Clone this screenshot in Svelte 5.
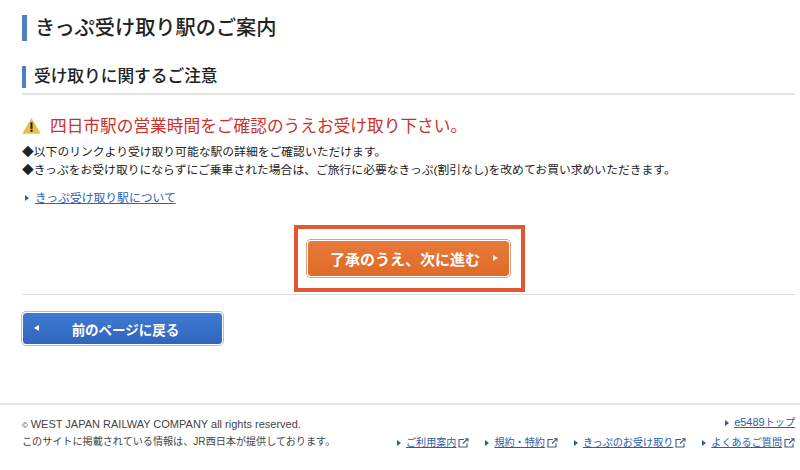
<script>
  const footerLinks = ['ご利用案内', '規約・特約', 'きっぷのお受け取り', 'よくあるご質問']
</script>

<main>
  <div class="content">
    <h1 class="title">きっぷ受け取り駅のご案内</h1>

    <h2 class="subtitle"><span>受け取りに関するご注意</span></h2>

    <p class="warning">
      <svg class="warnIcon" viewBox="0 0 18 16" width="19" height="17">
        <path d="M9 0.8 L17.4 15 Q17.6 15.8 16.8 15.8 L1.2 15.8 Q0.4 15.8 0.6 15 Z" fill="#eebb4d" />
        <rect x="8" y="5" width="2" height="6.2" fill="#222" />
        <rect x="8" y="12" width="2" height="2" fill="#222" />
      </svg>
      <span>四日市駅の営業時間をご確認のうえお受け取り下さい。</span>
    </p>
    <p class="note">◆以下のリンクより受け取り可能な駅の詳細をご確認いただけます。</p>
    <p class="note">◆きっぷをお受け取りにならずにご乗車された場合は、ご旅行に必要なきっぷ(割引なし)を改めてお買い求めいただきます。</p>

    <p class="infoLink"><span class="arrow"></span><a href="#top">きっぷ受け取り駅について</a></p>

    <div class="nextWrap">
      <div class="highlight">
        <button class="btn next">
          <span>了承のうえ、次に進む</span>
          <i class="tri right"></i>
        </button>
      </div>
    </div>

    <div class="backWrap">
      <button class="btn back">
        <i class="tri left"></i>
        <span>前のページに戻る</span>
      </button>
    </div>
  </div>

  <footer>
    <div class="copy">
      <p><span class="c">©</span> <span class="latin">WEST JAPAN RAILWAY COMPANY all rights reserved.</span></p>
      <p>このサイトに掲載されている情報は、JR西日本が提供しております。</p>
    </div>
    <div class="footLinks">
      <div class="topLink"><span class="arrow"></span><a href="#top"><span class="latin">e5489</span>トップ</a></div>
      <div class="linkRow">
        {#each footerLinks as label}
          <div class="footLink">
            <span class="arrow"></span><a href="#top">{label}</a>
            <svg class="ext" viewBox="0 0 11 10" width="11" height="10">
              <path d="M6 1.5 H1 V9 H9 V5.5" fill="none" stroke="#44587f" stroke-width="1.1" />
              <path d="M5 5.5 L9.5 1.2 M7 0.8 H10 V3.8" fill="none" stroke="#44587f" stroke-width="1.1" />
            </svg>
          </div>
        {/each}
      </div>
    </div>
  </footer>
</main>

<style>
  :global(body) {
    margin: 0;
    background: #fff;
  }
  main {
    width: 800px;
    height: 470px;
    overflow: hidden;
    font-family: "Liberation Sans", "Noto Sans CJK JP", sans-serif;
    color: #222;
  }
  p {
    margin: 0;
  }
  .content {
    padding: 15px 5px 0 22px;
    height: 389px;
    box-sizing: border-box;
  }
  .title {
    margin: 0;
    height: 26px;
    line-height: 26px;
    border-left: 5px solid #4d81c0;
    padding-left: 8px;
    font-size: 20.2px;
    font-weight: 500;
    color: #222;
  }
  .subtitle {
    margin: 25px 0 0;
    padding-bottom: 5px;
    border-bottom: 2px solid #e3e3e3;
    font-size: 16.7px;
    font-weight: 500;
    color: #222;
  }
  .subtitle span {
    display: block;
    height: 22px;
    line-height: 22px;
    border-left: 4px solid #4d81c0;
    padding-left: 8px;
  }
  .warning {
    margin-top: 18px;
    display: flex;
    align-items: center;
    gap: 9px;
    height: 24px;
    font-size: 16.7px;
    color: #c8322b;
  }
  .warnIcon {
    flex: none;
  }
  .note {
    font-size: 11.8px;
    line-height: 18px;
    color: #222;
  }
  .warning + .note {
    margin-top: 6px;
  }
  .infoLink {
    margin-top: 10px;
    font-size: 11.8px;
    line-height: 18px;
    display: flex;
    align-items: center;
  }
  .infoLink .arrow {
    margin: 0 6px 0 3px;
  }
  a {
    color: #2a63b8;
    text-decoration: underline;
  }
  .arrow {
    display: inline-block;
    width: 0;
    height: 0;
    border-left: 4px solid #2d62ad;
    border-top: 3px solid transparent;
    border-bottom: 3px solid transparent;
  }
  .nextWrap {
    margin-top: 18px;
    display: flex;
    justify-content: center;
    padding-bottom: 1px;
    border-bottom: 1px solid #ddd;
  }
  .highlight {
    border: 4px solid #e4572e;
    padding: 11px 11px 11px 9px;
    margin-bottom: 1px;
    margin-left: 2px;
  }
  .btn {
    display: flex;
    align-items: center;
    box-sizing: border-box;
    border-radius: 4px;
    font-family: inherit;
    font-weight: 700;
    color: #fff;
    padding: 0;
    position: relative;
  }
  .next {
    width: 203px;
    height: 37px;
    font-size: 15px;
    background: linear-gradient(#e8793a, #df6b27);
    border: 1px solid #fff;
    box-shadow: 0 0 0 1px #d9a07f;
    justify-content: flex-start;
    padding-left: 22px;
  }
  .tri {
    position: absolute;
    width: 0;
    height: 0;
    border-top: 3.5px solid transparent;
    border-bottom: 3.5px solid transparent;
  }
  .tri.right {
    right: 11px;
    top: 14px;
    border-left: 5px solid #fbeee6;
  }
  .tri.left {
    left: 11px;
    top: 12px;
    border-right: 5px solid #fff;
  }
  .backWrap {
    margin-top: 17px;
  }
  .back {
    width: 201px;
    height: 33px;
    font-size: 13.5px;
    background: linear-gradient(#3f7ad0, #2f66bd);
    border: 1px solid #fff;
    box-shadow: 0 0 0 1px #a9bfe0;
    justify-content: center;
    padding-left: 6px;
  }
  footer {
    border-top: 2px solid #e5e5e5;
    margin-top: 14px;
    height: 67px;
    box-sizing: border-box;
    padding: 9px 5px 0 22px;
    display: flex;
    justify-content: space-between;
    font-size: 10.1px;
    line-height: 16px;
    color: #444;
  }
  .copy {
    padding-top: 2px;
  }
  .c {
    font-size: 8px;
  }
  .latin {
    font-size: 11px;
  }
  .footLinks {
    display: flex;
    flex-direction: column;
    align-items: flex-end;
    gap: 4px;
  }
  .topLink, .footLink {
    display: flex;
    align-items: center;
  }
  .footLinks a {
    color: #2d5da6;
  }
  .footLinks .arrow {
    margin-right: 5px;
    border-left-color: #2a5c9f;
  }
  .linkRow {
    display: flex;
    gap: 16px;
  }
  .ext {
    margin-left: 2px;
  }
</style>
